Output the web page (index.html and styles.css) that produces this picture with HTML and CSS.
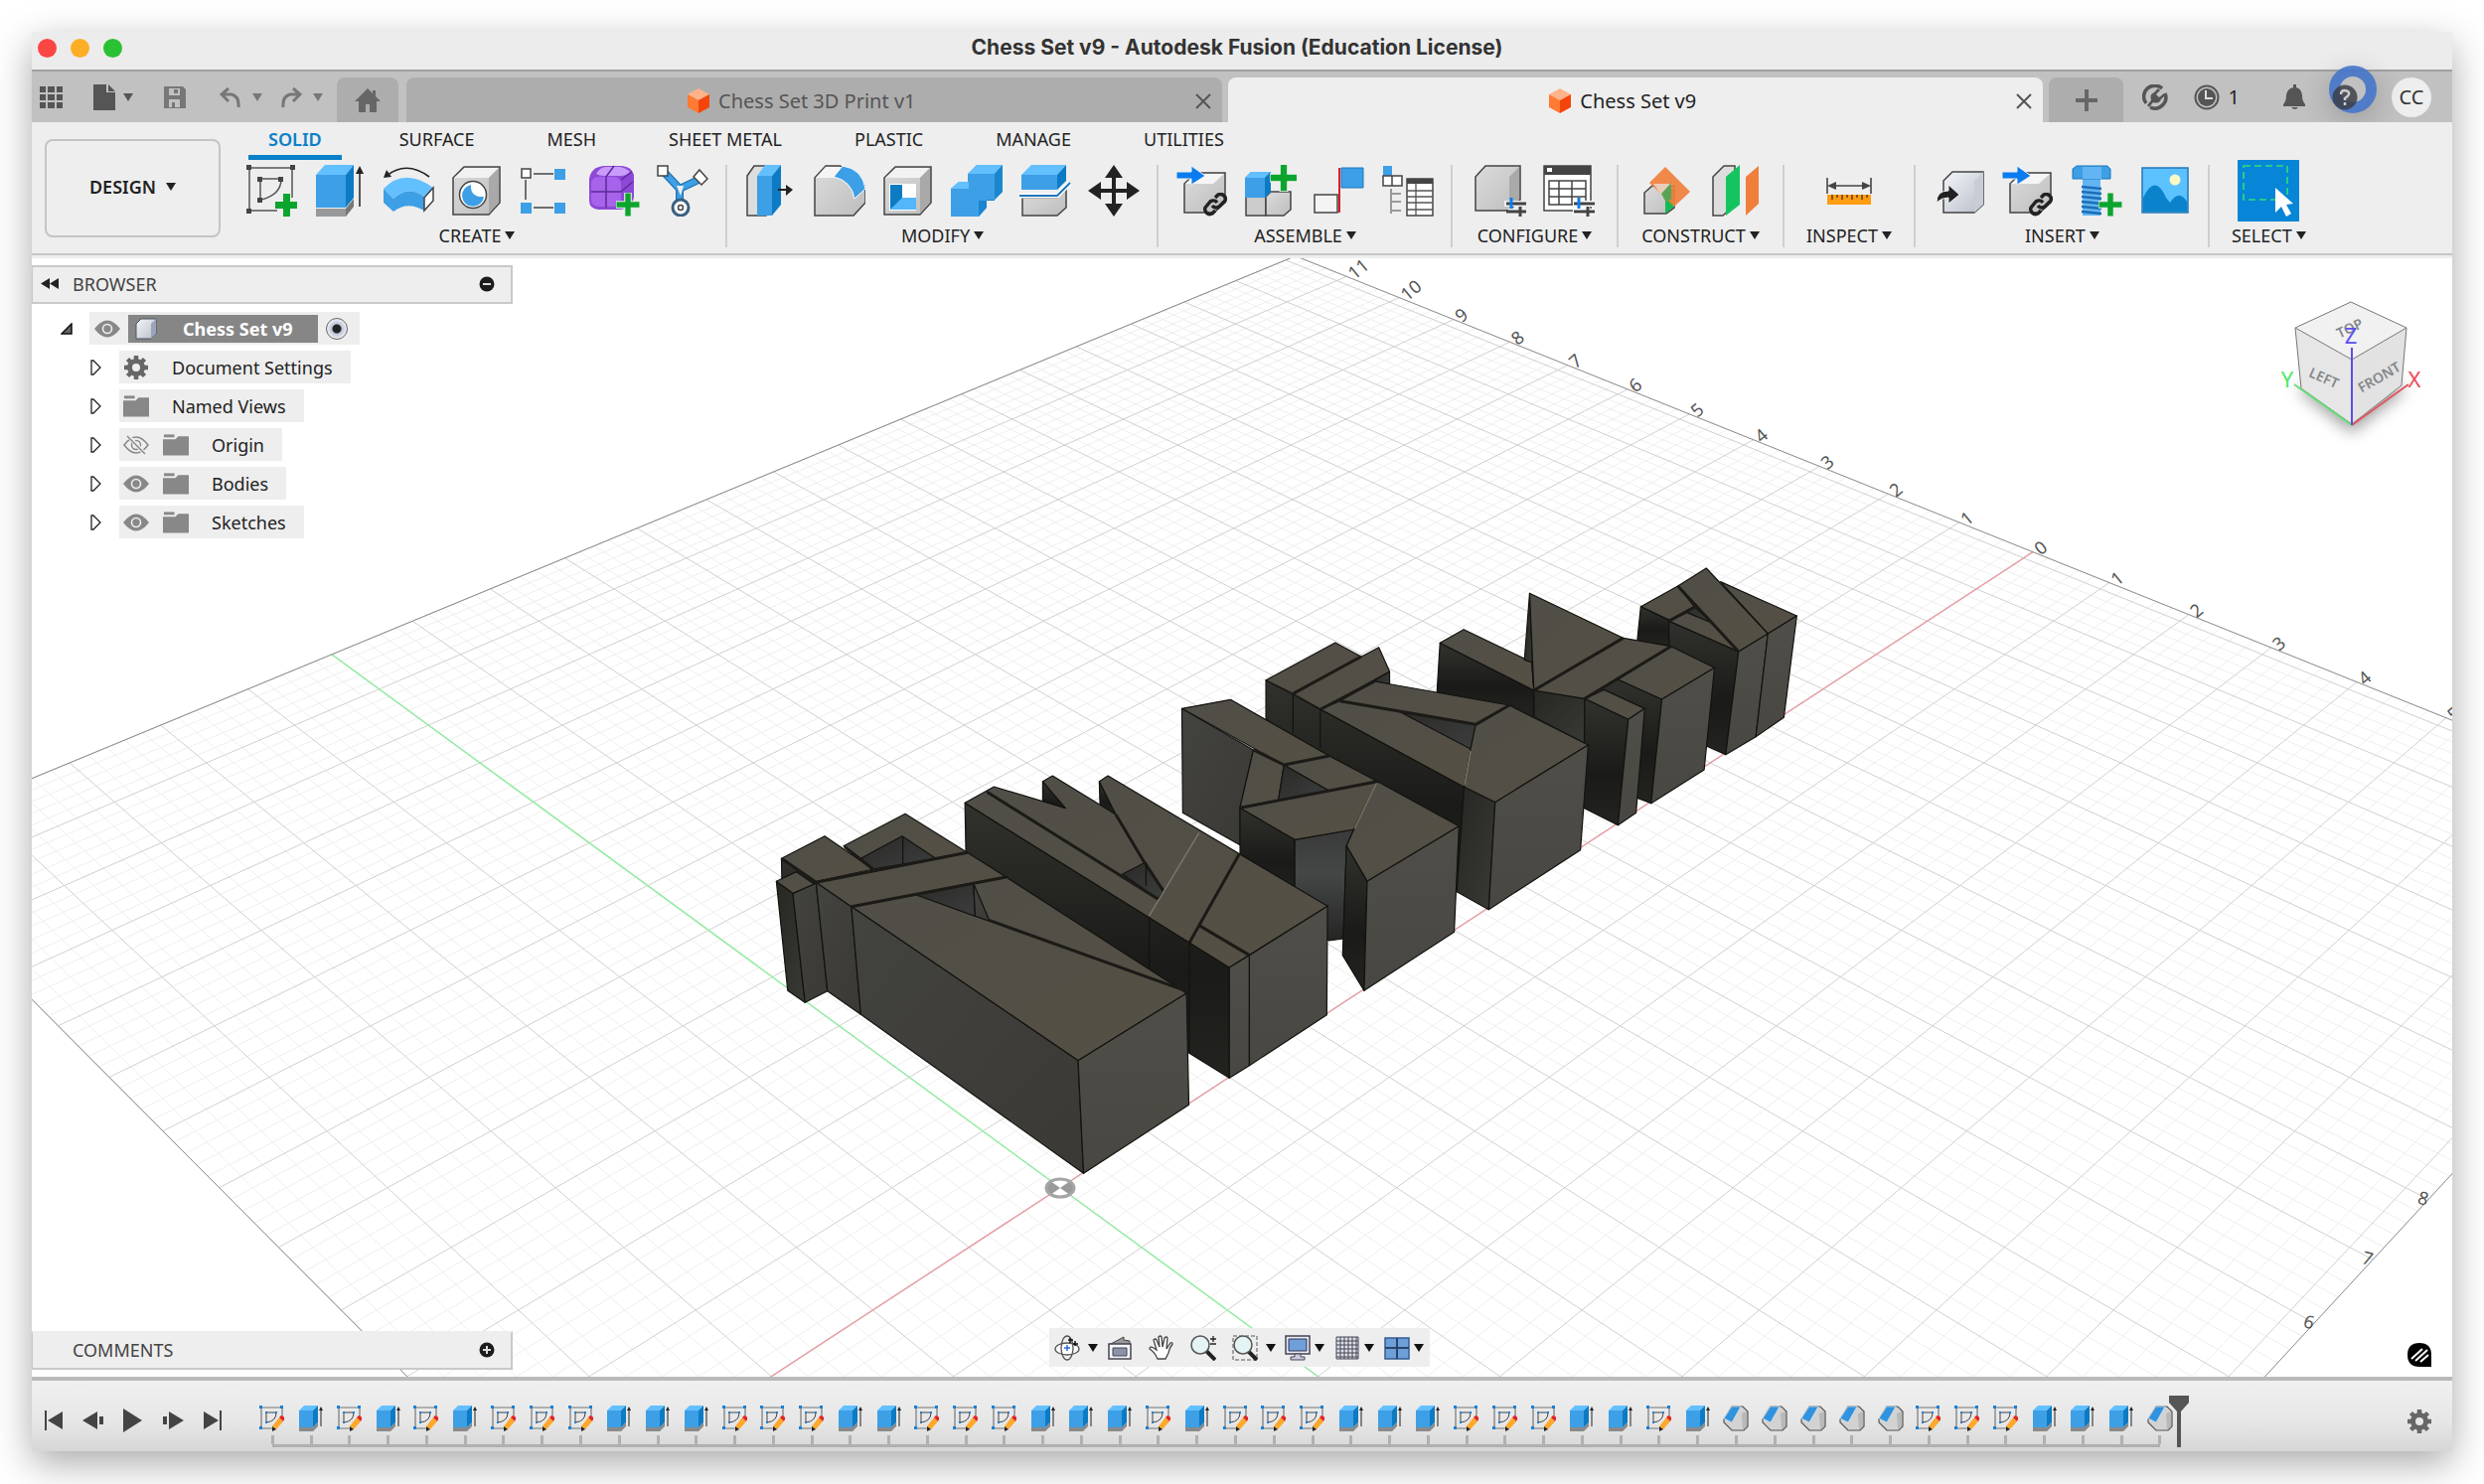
FILE: index.html
```html
<!DOCTYPE html>
<html lang="en">
<head>
<meta charset="utf-8">
<title>Chess Set v9 - Autodesk Fusion (Education License)</title>
<link rel="stylesheet" href="styles.css">
</head>
<body>
<svg class="defs" aria-hidden="true">
  <defs>
    <linearGradient id="gTop" x1="0" y1="0" x2="1" y2="1"><stop offset="0" stop-color="#504e48"/><stop offset="1" stop-color="#555044"/></linearGradient>
    <linearGradient id="gLeft" x1="0" y1="0" x2="1" y2="1"><stop offset="0" stop-color="#434340"/><stop offset="1" stop-color="#3b3934"/></linearGradient>
    <linearGradient id="gDark" x1="0" y1="0" x2="0" y2="1"><stop offset="0" stop-color="#31312d"/><stop offset=".6" stop-color="#1a1a18"/><stop offset="1" stop-color="#232320"/></linearGradient>
    <linearGradient id="gSide" x1="0" y1="0" x2="1" y2="1"><stop offset="0" stop-color="#262622"/><stop offset="1" stop-color="#3a3a35"/></linearGradient>
    <linearGradient id="gRight" x1="0" y1="0" x2="0" y2="1"><stop offset="0" stop-color="#4f4e49"/><stop offset="1" stop-color="#484741"/></linearGradient>
    <linearGradient id="gHole" x1="0" y1="0" x2="1" y2="1"><stop offset="0" stop-color="#2a2a28"/><stop offset="1" stop-color="#3c3e3d"/></linearGradient>
    <linearGradient id="gCurve" x1="0" y1="0" x2="0" y2="1"><stop offset="0" stop-color="#393a39"/><stop offset=".4" stop-color="#454747"/><stop offset="1" stop-color="#242423"/></linearGradient>
    <linearGradient id="gGrey" x1="0" y1="0" x2="1" y2="1"><stop offset="0" stop-color="#dcdcdc"/><stop offset="1" stop-color="#bdbdbd"/></linearGradient>
    <linearGradient id="gSteel" x1="0" y1="0" x2="1" y2="1"><stop offset="0" stop-color="#f4f6fa"/><stop offset="1" stop-color="#b8bdc8"/></linearGradient>
    <filter id="soft" x="-50%" y="-50%" width="200%" height="200%"><feGaussianBlur stdDeviation="8"/></filter>
  </defs>
  <symbol id="i-cube" viewBox="0 0 24 26"><path d="M12 0l11 6-11 6L1 6z" fill="#ffb38a"/><path d="M1 6l11 6v13L1 19z" fill="#ff7a33"/><path d="M23 6l-11 6v13l11-6z" fill="#f5440a"/></symbol>
  <symbol id="i-box" viewBox="0 0 52 52"><path d="M2 13L13 2h36v36L38 50H2z" fill="url(#gGrey)" stroke="#444" stroke-width="1.5"/><path d="M3 13L14 3h34L38 13z" fill="#f2f2f2"/><path d="M38 13L48 3v35L38 49z" fill="#a9a9a9"/></symbol>
  <symbol id="i-plus" viewBox="0 0 22 22"><path d="M8 0h6v8h8v6h-8v8H8v-8H0V8h8z" fill="#0ba52e" stroke="#eee" stroke-width="1"/></symbol>
  <symbol id="i-sketch" viewBox="0 0 52 52"><path d="M4 3h43M4 3v43M47 3v30M4 46h28" fill="none" stroke="#555" stroke-width="1.5"/><path d="M15 14h21M15 14v21M36 14q0 16-20 21" fill="none" stroke="#555" stroke-width="1.5"/><path d="M1 0h5v5H1zM45 0h5v5h-5zM1 44h5v5H1zM12 12h5v5h-5zM33 12h5v5h-5zM12 33h5v5h-5z" fill="#444"/><path d="M38 29h7v8h8v7h-8v8h-7v-8h-8v-7h8z" fill="#0ba52e"/></symbol>
  <symbol id="i-extrude" viewBox="0 0 52 52"><path d="M2 44h30v8H2z" fill="#999"/><path d="M32 44l8-10v8l-8 10z" fill="#777"/><path d="M2 10L11 0h29l-8 10z" fill="#63c0ff"/><path d="M2 10h30v33H2z" fill="#3d9fe5"/><path d="M32 10l8-10v33l-8 10z" fill="#0d7bc4"/><path d="M46 42V6" stroke="#222" stroke-width="1.5"/><path d="M42 9l4-8 4 8z" fill="#222"/></symbol>
  <symbol id="i-revolve" viewBox="0 0 52 52"><path d="M4 11Q24-5 47 12" fill="none" stroke="#222" stroke-width="1.6"/><path d="M1 13l3-8 5 7z" fill="#222"/><path d="M1 24Q22 2 51 23L42 32Q24 20 11 34z" fill="#63c0ff"/><path d="M1 24l10 10v13L1 38zM11 34Q25 20 42 32v14Q25 36 11 47z" fill="#3d9fe5"/><path d="M42 33l9-10v13l-9 10z" fill="#fff" stroke="#444" stroke-width="1.5"/></symbol>
  <symbol id="i-hole" viewBox="0 0 52 52"><use href="#i-box"/><circle cx="22" cy="30" r="13.500" fill="#fff" stroke="#444" stroke-width="1.500"/><path d="M20 20a11 11 0 1 0 13 12q-14 1-13-12z" fill="#3d9fe5"/></symbol>
  <symbol id="i-pattern" viewBox="0 0 52 52"><path d="M14 9h20M6 15v20M14 43h20" stroke="#444" stroke-width="1.5"/><path d="M2 4h9v9H2z" fill="#fff" stroke="#444" stroke-width="1.5"/><path d="M35 4h11v11H35zM1 38h11v11H1zM35 38h11v11H35z" fill="#3d9fe5"/></symbol>
  <symbol id="i-form" viewBox="0 0 52 52"><path d="M1 14Q3 2 16 1h18q10 1 12 9v22q-2 12-14 13H10q-9-1-9-9z" fill="#8c49d6"/><path d="M3 20q0-8 8-8h14q8 0 8 8v14q0 8-8 8H11q-8 0-8-8z" fill="#a763ea"/><path d="M8 9q4-7 10-7h14q6 1 10 5-4 4-9 4H16q-5 0-8-2z" fill="#c99bfa"/><path d="M18 12v31M3 27h30M33 15l11-8M33 27l12-10M18 12l8-11" stroke="#5c2a99" stroke-width="1.500" fill="none"/><use href="#i-plus" x="28" y="28" width="24" height="24"/></symbol>
  <symbol id="i-pipe" viewBox="0 0 52 52"><path d="M8 8l15 16v16M44 14L23 24" stroke="#1c6fb0" stroke-width="8" fill="none"/><path d="M8 8l15 16v16M44 14L23 24" stroke="#3d9fe5" stroke-width="5.500" fill="none"/><path d="M20 21h7l-3 10z" fill="#eee"/><path d="M1 1h10v10H1zM43 5l8 9-6 6-8-8z" fill="#fff" stroke="#444" stroke-width="1.5"/><circle cx="24" cy="43" r="8" fill="#fff" stroke="#3a5f80" stroke-width="3"/><circle cx="24" cy="43" r="2.500" fill="none" stroke="#444" stroke-width="1.500"/></symbol>
  <symbol id="i-press" viewBox="0 0 52 52"><path d="M2 11L9 1h12v50H2z" fill="#ddd" stroke="#444" stroke-width="1.500"/><path d="M12 11h15v40H12z" fill="#3d9fe5"/><path d="M12 11l8-11h16l-9 11z" fill="#63c0ff"/><path d="M27 11L36 0v40l-9 11z" fill="#0d7bc4"/><path d="M33 25h9" stroke="#222" stroke-width="2"/><path d="M41 20l7 5-7 6z" fill="#222"/></symbol>
  <symbol id="i-fillet" viewBox="0 0 52 52"><path d="M1 13L12 1h14Q50 8 52 26v12L40 51H1z" fill="url(#gGrey)" stroke="#444" stroke-width="1.5"/><path d="M2 13L12 2h17l-9 11z" fill="#f5f5f5"/><path d="M20 12L29 1Q49 4 52 24L41 34Q38 16 20 12z" fill="#3d9fe5" stroke="#fff"/></symbol>
  <symbol id="i-shell" viewBox="0 0 52 52"><use href="#i-box"/><path d="M7 19h27v27H7z" fill="#fff"/><path d="M8 20h12v15L8 45z" fill="#0d7bc4"/><path d="M8 45l12-12h14v12z" fill="#55b5fa"/></symbol>
  <symbol id="i-combine" viewBox="0 0 52 52"><path d="M0 24l8-7h9V9l9-9h26v27l-8 8h-8v8l-8 9H0z" fill="#3d9fe5"/><path d="M0 24l8-7h10v7zM18 9l8-9h26l-8 9z" fill="#63c0ff"/><path d="M44 9l8-9v27l-8 8h-8v8l-8 9V36h16z" fill="#1b86cf"/></symbol>
  <symbol id="i-split" viewBox="0 0 52 52"><path d="M3 33h35l9-9v19l-9 8H3z" fill="url(#gGrey)" stroke="#444" stroke-width="1.500"/><path d="M2 10L12 0h35l-9 10z" fill="#63c0ff"/><path d="M2 10h36v15H2z" fill="#3d9fe5"/><path d="M38 10l9-10v16l-9 9z" fill="#0d7bc4"/><path d="M0 31h38L51 18" fill="none" stroke="#fff" stroke-width="5"/><path d="M0 31h38L51 18" fill="none" stroke="#1b76bf" stroke-width="2"/></symbol>
  <symbol id="i-move" viewBox="0 0 52 52"><path d="M26 8v36M8 26h36" stroke="#222" stroke-width="4"/><path d="M26 0l9 13H17zM26 52l9-13H17zM0 26l13-9v18zM52 26l-13-9v18z" fill="#222"/></symbol>
  <symbol id="i-link" viewBox="0 0 28 24"><path d="M11 13a5 5 0 0 0 7 1l6-6a5 5 0 0 0-7-6l-3 3M16 10a5 5 0 0 0-7-1l-5 6a5 5 0 0 0 7 6l3-3" fill="none" stroke="#222" stroke-width="3.500"/></symbol>
  <symbol id="i-inslink" viewBox="0 0 52 52"><path d="M8 19L19 8h30v30L38 48H8z" fill="url(#gGrey)" stroke="#444" stroke-width="1.5"/><path d="M9 19L20 9h28L37 19z" fill="#f5f5f5"/><path d="M0 7h15V1l14 10-14 9v-6H0z" fill="#0a7cf0" stroke="#eee"/><use href="#i-link" x="25" y="28" width="28" height="24"/></symbol>
  <symbol id="i-newcomp" viewBox="0 0 52 52"><path d="M1 32h20v19H1z" fill="#ccc" stroke="#444" stroke-width="1.500"/><path d="M21 32l5-5h20v18l-7 6H21z" fill="url(#gGrey)" stroke="#444" stroke-width="1.5"/><path d="M0 13l6-6h20v20l-6 6H0z" fill="#3d9fe5"/><path d="M0 13l6-6h20l-6 6z" fill="#63c0ff"/><path d="M20 13l6-6v20l-6 6z" fill="#0d7bc4"/><use href="#i-plus" x="25" y="-1" width="28" height="28"/></symbol>
  <symbol id="i-joint" viewBox="0 0 52 52"><path d="M1 30h23v18H1z" fill="#f4f4f4" stroke="#444" stroke-width="1.5"/><path d="M26 3v45" stroke="#d81f2a" stroke-width="2"/><path d="M28 3h22v20H28z" fill="#3d9fe5" stroke="#1b76bf"/></symbol>
  <symbol id="i-bom" viewBox="0 0 52 52"><path d="M1 1h9v10H1z" fill="#3d9fe5"/><path d="M1 11h9v10H1zM10 11h10v10H10z" fill="#fff" stroke="#444" stroke-width="1.500"/><path d="M9 24v25M9 29h10M9 37h10M9 46h10" stroke="#999" stroke-width="2"/><path d="M25 14h26v37H25z" fill="#fff" stroke="#444" stroke-width="1.500"/><path d="M25 14h26v5H25z" fill="#444"/><path d="M25 26h26M25 32h26M25 38h26M25 45h26M34 19v32" stroke="#555" stroke-width="1.300"/></symbol>
  <symbol id="i-conf" viewBox="0 0 52 52"><path d="M1 12L11 1h35v34L35 46H1z" fill="url(#gGrey)" stroke="#444" stroke-width="1.5"/><path d="M35 12L45 2v33L35 45z" fill="#a9a9a9"/><path d="M30 39h22M34 47h18" stroke="#eee" stroke-width="6"/><path d="M32 39h20M32 47h20" stroke="#444" stroke-width="3"/><path d="M37 33v11" stroke="#0a7cf0" stroke-width="3"/><path d="M46 42v10" stroke="#444" stroke-width="3"/></symbol>
  <symbol id="i-conft" viewBox="0 0 52 52"><path d="M1 1h47v45H1z" fill="#fff" stroke="#444" stroke-width="1.5"/><path d="M1 1h47v9H1z" fill="#444"/><path d="M4 3h5v4H4z" fill="#fff"/><path d="M6 16h37v24H6zM6 24h37M6 32h37M16 16v24M29 16v24" fill="none" stroke="#444" stroke-width="1.500"/><path d="M30 39h22M30 47h22" stroke="#fff" stroke-width="6"/><path d="M31 39h21M31 47h21" stroke="#444" stroke-width="3"/><path d="M36 33v11" stroke="#0a7cf0" stroke-width="3"/><path d="M45 42v10" stroke="#444" stroke-width="3"/></symbol>
  <symbol id="i-plane" viewBox="0 0 52 52"><path d="M4 28l8-7h22v22l-8 6H4z" fill="url(#gGrey)" stroke="#444" stroke-width="1.5"/><path d="M25 49V30l9-8v20z" fill="#12b955"/><path d="M25 2L50 27 34 42 9 18z" fill="#f07f3c" opacity=".92"/><path d="M13 19h19L22 32z" fill="#e9cdb9"/><path d="M21 29l10-11v16l-5 4z" fill="#5aa356"/></symbol>
  <symbol id="i-midplane" viewBox="0 0 52 52"><path d="M4 12L15 1h11v39L14 51H4z" fill="#ddd" stroke="#444" stroke-width="1.500"/><path d="M17 12L31 0v40L17 51z" fill="#14c45f"/><path d="M37 12L50 1v38L37 51z" fill="#f07f3c"/></symbol>
  <symbol id="i-measure" viewBox="0 0 52 52"><path d="M4 13v16M48 13v16M7 21h38" stroke="#444" stroke-width="1.6"/><path d="M4 21l9-4v8zM48 21l-9-4v8z" fill="#444"/><path d="M4 30h44v10H4z" fill="#ff9c12"/><path d="M9 30v5M14 30v3M19 30v5M24 30v3M29 30v5M34 30v3M39 30v5M44 30v3" stroke="#663c00" stroke-width="1.500"/></symbol>
  <symbol id="i-derive" viewBox="0 0 52 52"><path d="M10 16L19 7h31v33l-9 8H10z" fill="url(#gSteel)" stroke="#444" stroke-width="1.5"/><path d="M41 16l9-9v33l-9 8z" fill="#c9ccd5"/><path d="M3 38q0-12 12-12v-6l11 10-11 9v-6q-7 0-12 5z" fill="#222" stroke="#eee"/></symbol>
  <symbol id="i-bolt" viewBox="0 0 52 52"><path d="M12 14h18v37H12z" fill="#63b4f2"/><path d="M11 22l20 2M11 27l20 2M11 32l20 2M11 37l20 2M11 42l20 2M11 47l20 2" stroke="#1b6fb5" stroke-width="2.500"/><path d="M2 4l4-3h31l3 3v10H2z" fill="#3d9fe5" stroke="#1b76bf"/><path d="M12 2h19v12H12z" fill="#63b4f2"/><use href="#i-plus" x="28" y="28" width="24" height="24"/></symbol>
  <symbol id="i-canvas" viewBox="0 0 52 52"><path d="M3 3h46v45H3z" fill="#5cc1ff" stroke="#2577b5" stroke-width="1.500"/><path d="M4 33q12-25 23 0l4 5q9-14 17-1v10H4z" fill="#0b83cc"/><circle cx="36" cy="15" r="5.500" fill="#fdf9c4"/></symbol>
  <symbol id="i-select" viewBox="0 0 62 62"><path d="M0 0h62v62H0z" fill="#0785d7"/><path d="M6 6h44v34H6z" fill="none" stroke="#2fe07a" stroke-width="1.600" stroke-dasharray="7 4"/><path d="M38 28l18 16-7 1 5 9-5 3-5-10-6 6z" fill="#fff"/></symbol>
  <symbol id="i-gear" viewBox="0 0 24 24"><circle cx="12" cy="12" r="6.500" fill="none" stroke="#666" stroke-width="5"/><path d="M12 0v4M12 20v4M0 12h4M20 12h4M3.500 3.500l3 3M17.500 17.500l3 3M3.500 20.500l3-3M17.500 6.500l3-3" stroke="#666" stroke-width="4.500"/></symbol>
  <symbol id="i-folder" viewBox="0 0 27 22"><path d="M1 0h11v3H1z" fill="#888"/><path d="M0 5h13l3-3h11v20H0z" fill="#888"/></symbol>
  <symbol id="i-eye" viewBox="0 0 26 18"><path d="M0 9q13-17 26 0-13 17-26 0z" fill="#888"/><circle cx="13" cy="9" r="4.500" fill="none" stroke="#eee" stroke-width="1.600"/></symbol>
  <symbol id="i-eyeoff" viewBox="0 0 26 20"><path d="M1 10q12-16 24 0-12 16-24 0z" fill="none" stroke="#888" stroke-width="1.5"/><circle cx="13" cy="10" r="4.500" fill="none" stroke="#888" stroke-width="1.500"/><path d="M5 1l17 18" stroke="#eee" stroke-width="4"/><path d="M4 1l18 18" stroke="#888" stroke-width="1.500"/></symbol>
  <symbol id="t-S" viewBox="0 0 26 26"><path d="M2 2h21M2 2v21M23 2v12M2 23h12" stroke="#777" fill="none" stroke-width="1.2"/><path d="M7 7h10M7 7v10M17 7q0 9-10 10" stroke="#444" fill="none"/><path d="M0 0h3v3H0zM21 0h3v3h-3zM0 21h3v3H0zM6 6h2v2H6zM16 6h2v2h-2zM6 16h2v2H6z" fill="#1680d8"/><path d="M13 21l7-9 4 4-7 8z" fill="#ffa82a"/><path d="M20 12l2-2q4 1 3 4l-1 2z" fill="#e32227"/><path d="M13 21l4 3-4 2z" fill="#222"/></symbol>
  <symbol id="t-E" viewBox="0 0 26 26"><path d="M1 22h14l5-5v4l-5 5H1z" fill="#8a8a8a"/><path d="M1 5l5-5h14l-5 5z" fill="#63c0ff"/><path d="M1 5h14v17H1z" fill="#3d9fe5"/><path d="M15 5l5-5v17l-5 5z" fill="#0d7bc4"/><path d="M23 21V4" stroke="#222"/><path d="M21 5l2-4 2 4z" fill="#222"/></symbol>
  <symbol id="t-C" viewBox="0 0 26 26"><path d="M1 14L9 1h11l5 5v15l-4 4H9l-8-8z" fill="#d2d2d2" stroke="#555" stroke-width="1.2"/><path d="M19 8l5-2v15l-4 3z" fill="#b8b8b8"/><path d="M1 13L9 1h9l-9 16z" fill="#2f93df" stroke="#eee" stroke-width=".6"/></symbol>
</svg>

<div class="window">
  <header class="titlebar">
    <div class="lights"><button class="light red" aria-label="Close"></button><button class="light amber" aria-label="Minimise"></button><button class="light green" aria-label="Zoom"></button></div>
    <h1>Chess Set v9 - Autodesk Fusion (Education License)</h1>
  </header>

  <div class="tabstrip">
    <div class="quick">
      <button aria-label="Data panel"><svg width="24" height="24" viewBox="0 0 24 24"><path fill="#555" d="M0 1h6v6H0zM8 1h7v6H8zM17 1h6v6h-6zM0 9h6v6H0zM8 9h7v6H8zM17 9h6v6h-6zM0 17h6v6H0zM8 17h7v6H8zM17 17h6v6h-6z"/></svg></button>
      <button aria-label="File" class="pair"><svg width="22" height="26" viewBox="0 0 22 26"><path fill="#555" d="M0 0h13v8h9v18H0zM15 0l7 7h-7z"/></svg><i class="caret"></i></button>
      <button aria-label="Save"><svg width="24" height="24" viewBox="0 0 24 24"><path fill="#777" fill-rule="evenodd" d="M1 1h19l3 3v19H1zM6 3v7h11V3zM6 14v8h11v-8zM11 4h4v4h-4zM9 17h3v5H9z"/></svg></button>
      <button aria-label="Undo" class="pair dim"><svg width="22" height="24" viewBox="0 0 22 24"><path d="M9 3L2 9l7 7M3 9h9q8 2 7 13" fill="none" stroke="#777" stroke-width="3"/></svg><i class="caret"></i></button>
      <button aria-label="Redo" class="pair dim"><svg width="22" height="24" viewBox="0 0 22 24"><path d="M13 3l7 6-7 7M19 9h-9Q2 11 3 22" fill="none" stroke="#777" stroke-width="3"/></svg><i class="caret"></i></button>
    </div>
    <button class="home" aria-label="Home"><svg width="26" height="24" viewBox="0 0 26 24"><path fill="#666" d="M13 0l5 5V2h3v6l5 5h-4v11h-7v-8h-4v8H4V13H0z"/></svg></button>
    <div class="doc"><span class="docname"><svg width="24" height="26"><use href="#i-cube"/></svg>Chess Set 3D Print v1</span><button aria-label="Close tab"><svg width="16" height="16" viewBox="0 0 16 16"><path d="M1 1l14 14M15 1L1 15" stroke="#555" stroke-width="2"/></svg></button></div>
    <div class="doc active"><span class="docname"><svg width="24" height="26"><use href="#i-cube"/></svg>Chess Set v9</span><button aria-label="Close tab"><svg width="16" height="16" viewBox="0 0 16 16"><path d="M1 1l14 14M15 1L1 15" stroke="#555" stroke-width="2"/></svg></button></div>
    <button class="newtab" aria-label="New tab"><svg width="22" height="22" viewBox="0 0 22 22"><path d="M11 0v22M0 11h22" stroke="#666" stroke-width="4"/></svg></button>
    <div class="status">
      <button aria-label="Extensions"><svg width="26" height="26" viewBox="0 0 26 26"><path d="M20 4A11 11 0 0 0 4 19M8 23a11 11 0 0 0 15-14" fill="none" stroke="#555" stroke-width="3.500"/><path d="M5 21l4-5q-2-6 3-8l5 5 2 2q-2 5-8 3l-4 5zM12 8l4-4 2 2-4 4zM17 13l5-4 1 2-4 4z" fill="#555"/></svg></button>
      <button aria-label="Job status" class="jobs"><svg width="26" height="26" viewBox="0 0 26 26"><circle cx="13" cy="13" r="11.500" fill="none" stroke="#555" stroke-width="2"/><circle cx="13" cy="13" r="9" fill="#555"/><path d="M12 6v8h7" stroke="#ddd" stroke-width="2" fill="none"/></svg>1</button>
      <button aria-label="Notifications"><svg width="22" height="26" viewBox="0 0 22 26"><path fill="#555" d="M10 0h3v3q5 1 6 8 0 6 3 9v2H0v-2q3-3 3-9 1-7 7-8zM8 23h7q-3 4-7 0z"/></svg></button>
      <button aria-label="Help" class="help"><i class="ring"></i><svg width="26" height="26" viewBox="0 0 26 26"><circle cx="13" cy="13" r="12.500" fill="#3c3f48" opacity=".85"/><path d="M9 10q0-4 4-4 5 1 4 4-1 2-4 4v2M13 18v3" fill="none" stroke="#ccc" stroke-width="2.500"/></svg></button>
      <button class="avatar">CC</button>
    </div>
  </div>

  <div class="ribbon">
    <button class="workspace">DESIGN <i class="caret"></i></button>
    <div class="tools">
      <nav class="tabs"><a href="#solid" class="on">SOLID</a><a href="#surface">SURFACE</a><a href="#mesh">MESH</a><a href="#sheet">SHEET METAL</a><a href="#plastic">PLASTIC</a><a href="#manage">MANAGE</a><a href="#utilities">UTILITIES</a></nav>
      <div class="groups">
        <section class="group first"><div class="icons">
          <button aria-label="Create sketch"><svg><use href="#i-sketch"/></svg></button><button aria-label="Extrude"><svg><use href="#i-extrude"/></svg></button><button aria-label="Revolve"><svg><use href="#i-revolve"/></svg></button><button aria-label="Hole"><svg><use href="#i-hole"/></svg></button><button aria-label="Pattern"><svg><use href="#i-pattern"/></svg></button><button aria-label="Create form"><svg><use href="#i-form"/></svg></button><button aria-label="Volumetric lattice"><svg><use href="#i-pipe"/></svg></button></div>
          <button class="glabel">CREATE<i class="caret"></i></button></section>
        <section class="group"><div class="icons">
          <button aria-label="Press pull"><svg><use href="#i-press"/></svg></button><button aria-label="Fillet"><svg><use href="#i-fillet"/></svg></button><button aria-label="Shell"><svg><use href="#i-shell"/></svg></button><button aria-label="Combine"><svg><use href="#i-combine"/></svg></button><button aria-label="Split body"><svg><use href="#i-split"/></svg></button><button aria-label="Move"><svg><use href="#i-move"/></svg></button></div>
          <button class="glabel">MODIFY<i class="caret"></i></button></section>
        <section class="group"><div class="icons">
          <button aria-label="Insert component"><svg><use href="#i-inslink"/></svg></button><button aria-label="New component"><svg><use href="#i-newcomp"/></svg></button><button aria-label="Joint"><svg><use href="#i-joint"/></svg></button><button aria-label="Bill of materials"><svg><use href="#i-bom"/></svg></button></div>
          <button class="glabel">ASSEMBLE<i class="caret"></i></button></section>
        <section class="group narrow"><div class="icons">
          <button aria-label="Configure"><svg><use href="#i-conf"/></svg></button><button aria-label="Configuration table"><svg><use href="#i-conft"/></svg></button></div>
          <button class="glabel">CONFIGURE<i class="caret"></i></button></section>
        <section class="group narrow"><div class="icons">
          <button aria-label="Offset plane"><svg><use href="#i-plane"/></svg></button><button aria-label="Midplane"><svg><use href="#i-midplane"/></svg></button></div>
          <button class="glabel">CONSTRUCT<i class="caret"></i></button></section>
        <section class="group narrow"><div class="icons"><button aria-label="Measure"><svg><use href="#i-measure"/></svg></button></div>
          <button class="glabel">INSPECT<i class="caret"></i></button></section>
        <section class="group"><div class="icons">
          <button aria-label="Derive"><svg><use href="#i-derive"/></svg></button><button aria-label="Insert link"><svg><use href="#i-inslink"/></svg></button><button aria-label="Insert fastener"><svg><use href="#i-bolt"/></svg></button><button aria-label="Canvas"><svg><use href="#i-canvas"/></svg></button></div>
          <button class="glabel">INSERT<i class="caret"></i></button></section>
        <section class="group narrow last"><div class="icons"><button class="select" aria-label="Select"><svg><use href="#i-select"/></svg></button></div>
          <button class="glabel">SELECT<i class="caret"></i></button></section>
      </div>
    </div>
  </div>

  <main class="stage">
    <svg class="scene" viewBox="32 257 2436 1129" preserveAspectRatio="xMidYMid slice" role="img" aria-label="Chess set model on the ground grid">
      <g id="grid"></g>
      <g class="mesh" transform="translate(1160 540) scale(.43368 .33333)">
        <!-- pawn -->
        <g>
          <path fill="url(#gDark)" d="M1133 212L1200 253V330L1125 312z"/>
          <path fill="url(#gTop)" d="M1133 212L1219 150 1258 213 1200 253z"/>
          <path fill="url(#gHole)" d="M1200 253L1258 213 1310 275z"/>
          <path fill="url(#gTop)" d="M1198 256L1240 230 1300 262 1360 348z"/>
          <path fill="url(#gDark)" d="M1198 256L1360 348 1330 659 1285 633 1200 520z"/>
          <path fill="url(#gTop)" d="M1318 137L1495 240 1428 294z"/>
          <path fill="url(#gTop)" d="M1219 150L1285 96 1428 294 1360 348z"/>
          <path fill="url(#gRight)" d="M1360 348L1428 294 1400 605 1330 659z"/>
          <path fill="url(#gRight)" d="M1428 294L1495 240 1465 547 1400 605z"/>
          <path class="heavy" d="M1198 256L1258 213M1219 150L1360 348"/>
        </g>
        <!-- knight -->
        <g>
          <path fill="url(#gDark)" d="M667 322L885 465 884 545 660 470z"/>
          <path fill="url(#gTop)" d="M667 322L722 281 880 380 885 465z"/>
          <path fill="url(#gSide)" d="M875 172L885 465 880 380 863 373z"/>
          <path fill="url(#gTop)" d="M875 172L1092 307 885 465z"/>
          <path fill="url(#gSide)" d="M885 465L1003 490 1003 625 885 545z"/>
          <path fill="url(#gTop)" d="M885 465L1092 307 1203 332 1003 490z"/>
          <path fill="url(#gDark)" d="M1040 462L1080 432 1182 492 1157 806 1125 790z"/>
          <path fill="url(#gTop)" d="M1080 432L1203 332 1304 397 1182 492z"/>
          <path fill="url(#gRight)" d="M1182 492L1304 397 1280 705 1157 806z"/>
          <path fill="url(#gDark)" d="M1003 490L1104 553 1080 872 1000 820z"/>
          <path fill="url(#gTop)" d="M1003 490L1048 463 1142 520 1104 553z"/>
          <path fill="url(#gRight)" d="M1104 553L1142 520 1122 835 1080 872z"/>
          <path class="heavy" d="M885 465L1092 307M1003 490L1203 332"/>
        </g>
        <!-- rook -->
        <g>
          <path fill="url(#gDark)" d="M263 434L723 757 706 1073 263 550z"/>
          <path fill="url(#gTop)" d="M263 434L424 321 484 363 326 475z"/>
          <path fill="url(#gSide)" d="M550 408L512 437 550 446z"/>
          <path fill="url(#gTop)" d="M326 475L525 335 550 408 390 522z"/>
          <path fill="url(#gHole)" d="M560 520L750 568 738 648z"/>
          <path fill="url(#gTop)" d="M390 522L435 497 570 527 738 642 723 757z"/>
          <path fill="url(#gTop)" d="M435 497L515 438 828 510 750 568z"/>
          <path fill="url(#gTop)" d="M750 568L828 510 1011 630 795 803 723 757 738 642z"/>
          <path fill="url(#gSide)" d="M723 757L795 803 780 1127 706 1073z"/>
          <path fill="url(#gRight)" d="M795 803L1011 630 993 947 780 1127z"/>
          <path class="heavy" d="M326 475L484 363M390 522L515 438M435 497L750 568 828 510"/>
          <path d="M326 475V595M389 522V640"/>
          <path class="seam" d="M738 648L724 752"/>
        </g>
        <!-- bishop -->
        <g>
          <path fill="url(#gLeft)" d="M68 520L234 645 203 820V932L70 835z"/>
          <path fill="url(#gTop)" d="M68 520L181 493 410 663 305 690z"/>
          <path fill="url(#gTop)" d="M234 645L305 690 292 797 203 818z"/>
          <path fill="url(#gHole)" d="M305 690L410 768 292 797z"/>
          <path fill="url(#gTop)" d="M305 690L410 663 522 740 410 768z"/>
          <path fill="url(#gDark)" d="M203 820L330 916V1090L203 960z"/>
          <path fill="url(#gCurve)" d="M330 916L467 885 450 935 443 1215 409 1221 330 1110z"/>
          <path fill="url(#gTop)" d="M203 820L522 740 467 885 330 916z"/>
          <path fill="url(#gTop)" d="M522 740L711 875 498 1042 450 935 467 885z"/>
          <path fill="url(#gDark)" d="M450 935L498 1042 491 1372 441 1265z"/>
          <path fill="url(#gRight)" d="M498 1042L711 875 700 1195 491 1372z"/>
          <path class="heavy" d="M234 645L305 690 410 663M203 820L522 740"/>
          <path class="seam" d="M520 745L469 882"/>
        </g>
      </g>
      <g class="mesh" transform="translate(760 760) scale(.39541 .33333)">
        <!-- queen -->
        <g>
          <path fill="url(#gDark)" d="M534 145L1207 642V976L1104 900 540 520z"/>
          <path fill="url(#gDark)" d="M732 80L790 161 732 140zM876 80L920 182 878 158z"/>
          <path fill="url(#gTop)" d="M534 145L608 96 790 161 732 80 757 63 918 180 876 80 898 63 1457 457 1207 642z"/>
          <path fill="url(#gHole)" d="M935 360L993 325 1040 412 1025 435z"/>
          <path fill="url(#gRight)" d="M1207 642L1258 605V938L1207 976z"/>
          <path fill="url(#gRight)" d="M1258 605L1457 457 1455 785 1258 938z"/>
          <path class="heavy" d="M590 112L1025 435M918 180L990 323 1040 412M1232 300L1105 568M1130 515L1258 605"/>
          <path d="M995 325V395M1003 490V645M1105 568V900"/>
          <path class="seam" d="M1130 235L1003 486"/>
        </g>
        <!-- king -->
        <g>
          <path fill="url(#gTop)" d="M225 275L382 178 540 295 300 345z"/>
          <path fill="url(#gHole)" d="M270 312L374 245 460 313 300 345z"/>
          <path d="M376 247V328"/>
          <path fill="url(#gDark)" d="M67 313L155 385 160 700 70 500z"/>
          <path fill="url(#gTop)" d="M67 313L177 245 300 345 155 383z"/>
          <path fill="url(#gSide)" d="M54 382L96 418 127 748 83 712z"/>
          <path fill="url(#gLeft)" d="M96 418L155 387 184 713 127 748z"/>
          <path fill="url(#gTop)" d="M54 382L105 353 150 390 96 418z"/>
          <path fill="url(#gLeft)" d="M155 385L245 458 269 784 184 713z"/>
          <path fill="url(#gTop)" d="M155 385L540 295 640 370 245 458z"/>
          <path fill="url(#gTop)" d="M245 458L640 370 1098 720 822 923z"/>
          <path fill="url(#gLeft)" d="M245 458L822 923 836 1264 269 784z"/>
          <path fill="url(#gRight)" d="M822 923L1098 720 1104 1057 836 1264z"/>
          <path fill="url(#gHole)" d="M410 423L556 389 560 487z"/>
          <path fill="url(#gLeft)" d="M556 389L597 502 560 487z"/>
          <path class="heavy" d="M67 313L155 385 540 295M245 458L635 370M228 278L300 345M597 500L1095 712"/>
        </g>
      </g>
      <g class="origin"><ellipse cx="1067" cy="1196" rx="14" ry="9" fill="#fff" opacity=".9"/><path d="M1067 1196L1057 1189Q1048 1196 1057 1203zM1067 1196L1077 1189Q1086 1196 1077 1203z" fill="#999"/><ellipse cx="1067" cy="1196" rx="14" ry="9" fill="none" stroke="#a5a5a5" stroke-width="3"/></g>
      <g class="viewcube">
        <path d="M2312 392L2367 436 2422 392 2367 372z" fill="#555" opacity=".55" filter="url(#soft)"/>
        <path d="M2366 304L2422 330 2367 362 2310 330z" fill="#f1f1f1"/>
        <path d="M2310 330L2367 362V428L2316 391z" fill="#e6e6e6"/>
        <path d="M2422 330L2367 362V428L2417 388z" fill="#e2e2e2"/>
        <path d="M2366 304L2422 330 2367 362 2310 330zM2310 330L2316 391 2367 427 2417 388 2422 330" fill="none" stroke="#777"/>
        <text transform="translate(2367 335) rotate(-25)" class="face small">TOP</text>
        <text transform="translate(2337 385) rotate(24)" class="face small">LEFT</text>
        <text transform="translate(2397 384) rotate(-30)" class="face small">FRONT</text>
        <path d="M2309 387L2367 428" stroke="#63e07a" stroke-width="2"/><path d="M2367 428L2424 387" stroke="#e05560" stroke-width="2"/><path d="M2367 350V428" stroke="#5a50e0" stroke-width="2"/>
        <text x="2366" y="346" class="axis" fill="#5b4ff0">Z</text><text x="2302" y="390" class="axis" fill="#4fe866">Y</text><text x="2430" y="390" class="axis" fill="#ee4a58">X</text>
      </g>
      <path d="M2423 1364q0-12 12-12t12 12v12h-12q-12 0-12-12z" fill="#000"/><path d="M2427 1368l11-10M2431 1370l12-11M2436 1371l8-7" stroke="#fff" stroke-width="2"/>
    </svg>

    <aside class="side">
      <div class="panelbar"><button aria-label="Collapse"><svg width="18" height="11" viewBox="0 0 18 11"><path d="M9 0v11L0 5.500zM18 0v11L9 5.500z" fill="#222"/></svg></button><h2>BROWSER</h2><button aria-label="Hide"><svg width="16" height="16" viewBox="0 0 16 16"><circle cx="8" cy="8" r="7.500" fill="#1c1c1c"/><path d="M4 8h8" stroke="#ddd" stroke-width="2"/></svg></button></div>
      <ul class="tree">
        <li class="root"><svg class="tw" width="12" height="12" viewBox="0 0 12 12"><path d="M11 1v10H1z" fill="#666" stroke="#111" stroke-width="1.500"/></svg><span class="chip"><svg width="26" height="18"><use href="#i-eye"/></svg><span class="sel"><svg width="22" height="22" viewBox="0 0 22 22"><path d="M1 6l5-5h15v15l-5 5H1z" fill="url(#gSteel)" stroke="#4b5166"/><path d="M16 6l5-5v15l-5 5z" fill="#9aa3b8"/></svg>Chess Set v9</span><input type="radio" checked aria-label="Activate Chess Set v9"></span></li>
        <li><svg class="tw" width="12" height="16" viewBox="0 0 12 16"><path d="M1 1h2l7 7-7 7H1z" fill="#fff" stroke="#222" stroke-width="1.300"/></svg><span class="chip"><svg width="26" height="26" viewBox="-1 -1 26 26"><use href="#i-gear" width="24" height="24"/></svg><span>Document Settings</span></span></li>
        <li><svg class="tw" width="12" height="16" viewBox="0 0 12 16"><path d="M1 1h2l7 7-7 7H1z" fill="#fff" stroke="#222" stroke-width="1.300"/></svg><span class="chip"><svg width="26" height="22"><use href="#i-folder"/></svg><span>Named Views</span></span></li>
        <li><svg class="tw" width="12" height="16" viewBox="0 0 12 16"><path d="M1 1h2l7 7-7 7H1z" fill="#fff" stroke="#222" stroke-width="1.300"/></svg><span class="chip"><svg width="26" height="20"><use href="#i-eyeoff"/></svg><svg width="26" height="22"><use href="#i-folder"/></svg><span>Origin</span></span></li>
        <li><svg class="tw" width="12" height="16" viewBox="0 0 12 16"><path d="M1 1h2l7 7-7 7H1z" fill="#fff" stroke="#222" stroke-width="1.300"/></svg><span class="chip"><svg width="26" height="18"><use href="#i-eye"/></svg><svg width="26" height="22"><use href="#i-folder"/></svg><span>Bodies</span></span></li>
        <li><svg class="tw" width="12" height="16" viewBox="0 0 12 16"><path d="M1 1h2l7 7-7 7H1z" fill="#fff" stroke="#222" stroke-width="1.300"/></svg><span class="chip"><svg width="26" height="18"><use href="#i-eye"/></svg><svg width="26" height="22"><use href="#i-folder"/></svg><span>Sketches</span></span></li>
      </ul>
      <div class="panelbar comments"><h2>COMMENTS</h2><button aria-label="Show comments"><svg width="16" height="16" viewBox="0 0 16 16"><circle cx="8" cy="8" r="7.500" fill="#1c1c1c"/><path d="M4 8h8M8 4v8" stroke="#ddd" stroke-width="2"/></svg></button></div>
    </aside>

    <div class="navbar">
      <button class="pair" aria-label="Orbit"><svg viewBox="0 0 26 26"><ellipse cx="13" cy="14" rx="12" ry="6" fill="#fff" stroke="#555" stroke-width="1.300"/><ellipse cx="13" cy="13" rx="6" ry="12" fill="none" stroke="#555" stroke-width="1.3"/><path d="M13 10v6M10 13h6" stroke="#2a6bd0" stroke-width="1.500"/><path d="M16 3v5M14 5h5M21 6v5M19 9h5" stroke="#111" stroke-width="1.500"/></svg><i class="caret"></i></button>
      <button aria-label="Look at"><svg viewBox="0 0 26 26"><path d="M2 10L17 2v3l6 1v5H2z" fill="#999" stroke="#444"/><path d="M2 9h22v15H2z" fill="#f5f6fa" stroke="#445" stroke-width="1.500"/><path d="M6 13h14v8H6z" fill="#8b93a5" stroke="#445"/></svg></button>
      <button aria-label="Pan"><svg viewBox="0 0 26 26"><path d="M9 24Q6 17 1 14q0-3 4-1l3 2L5 5q2-2 3 0l3 7-1-10q2-2 3 0l1 10 2-9q2-2 3 0l-1 11 4-6q2-1 2 1-3 4-4 9l-3 6z" fill="#fff" stroke="#444" stroke-width="1.3"/></svg></button>
      <button aria-label="Zoom"><svg viewBox="0 0 26 26"><path d="M16 16l9 9" stroke="#222" stroke-width="4"/><circle cx="10" cy="10" r="9" fill="#e4f3f3" stroke="#555" stroke-width="1.5"/><path d="M23 1v6M20 4h6M20 9h6" stroke="#222" stroke-width="1.300"/></svg></button>
      <button class="pair" aria-label="Fit"><svg viewBox="0 0 26 26"><path d="M1 1h24v24H1z" fill="none" stroke="#555" stroke-dasharray="4 2"/><path d="M16 16l9 9" stroke="#222" stroke-width="4"/><circle cx="11" cy="10" r="9" fill="#e4f3f3" stroke="#555" stroke-width="1.500"/></svg><i class="caret"></i></button>
      <button class="pair tight" aria-label="Display settings"><svg viewBox="0 0 26 26"><path d="M1 1h24v18H1z" fill="#e8ecf2" stroke="#445" stroke-width="1.5"/><path d="M4 4h18v12H4z" fill="#6f9fd8" stroke="#335"/><path d="M10 19h6v3h4v3H6v-3h4z" fill="#ccd" stroke="#445"/></svg><i class="caret"></i></button>
      <button class="pair tight" aria-label="Grid and snaps"><svg viewBox="0 0 26 26"><path d="M2 2h22v22H2z" fill="#dde0e8"/><path d="M2 2h22v22H2zM6 2v22M10 2v22M14 2v22M18 2v22M22 2v22M2 6h22M2 10h22M2 14h22M2 18h22M2 22h22" fill="none" stroke="#445"/></svg><i class="caret"></i></button>
      <button class="pair tight" aria-label="Viewports"><svg viewBox="0 0 26 26"><path d="M1 3h24v21H1z" fill="#6f9fd8" stroke="#335c94" stroke-width="1.5"/><path d="M13 3v21M1 13h24" stroke="#27466f" stroke-width="2"/></svg><i class="caret"></i></button>
    </div>
  </main>

  <footer class="timeline">
    <div class="playback">
      <button aria-label="To start"><svg viewBox="0 0 22 22"><path d="M2 1h2v20H2zM20 2v18L5 11z" fill="#444"/></svg></button>
      <button aria-label="Step back"><svg viewBox="0 0 22 22"><path d="M15 2v18L0 11zM17 7h4v8h-4z" fill="#444"/></svg></button>
      <button aria-label="Play"><svg viewBox="0 0 22 24"><path d="M1 0l19 12L1 24z" fill="#444"/></svg></button>
      <button aria-label="Step forward"><svg viewBox="0 0 22 22"><path d="M7 2v18l15-9zM1 7h4v8H1z" fill="#444"/></svg></button>
      <button aria-label="To end"><svg viewBox="0 0 22 22"><path d="M18 1h2v20h-2zM2 2v18l15-9z" fill="#444"/></svg></button>
    </div>
    <ol class="features" id="features"></ol>
    <div class="tail"><svg class="marker" width="20" height="52" viewBox="0 0 20 52"><path d="M0 0h20v7l-8 9v36H8V16L0 7z" fill="#555"/></svg><button aria-label="Timeline settings"><svg width="26" height="26" viewBox="-1 -1 26 26"><use href="#i-gear" width="24" height="24"/></svg></button></div>
  </footer>
</div>
<script src="app.js"></script>
</body>
</html>
```
FILE: styles.css
```css
* { box-sizing: border-box; }
body {
  margin: 0;
  padding: 32px 32px 33px;
  height: 100vh;
  background: #fff;
  color: #222;
  font: 18px/24px "Noto Sans", "Open Sans", sans-serif;
}
button {
  display: inline-flex;
  align-items: center;
  justify-content: center;
  padding: 0;
  border: 0;
  background: none;
  color: inherit;
  font: inherit;
}
svg { display: block; flex: none; }
h1, h2, ul, ol { margin: 0; padding: 0; font-weight: 400; list-style: none; }
.defs { position: absolute; width: 0; height: 0; }
.caret {
  flex: none;
  width: 0;
  height: 0;
  border: 5px solid transparent;
  border-top: 8px solid currentColor;
  border-bottom: 0;
}
.window {
  display: flex;
  flex-direction: column;
  height: 100%;
  background: #eee;
  box-shadow: 0 12px 36px rgba(0, 0, 0, .34);
}

/* title bar */
.titlebar {
  display: grid;
  grid-template-columns: 1fr auto 1fr;
  align-items: center;
  height: 40px;
  padding: 0 16px 6px 6px;
  background: #ececec;
  border-bottom: 2px solid #a0a2a0;
}
.lights { display: flex; gap: 14px; }
.light { width: 19px; height: 19px; border-radius: 50%; }
.red { background: #fc4644; }
.amber { background: #fdae25; }
.green { background: #2ac132; }
.titlebar h1 { font: 700 21px/24px Inter, sans-serif; color: #333; }

/* document tabs */
.tabstrip { display: flex; align-items: flex-end; height: 51px; background: #c1c1c1; }
.quick { display: flex; align-self: center; align-items: center; gap: 30px; width: 307px; padding-left: 8px; color: #555; }
.pair { gap: 8px; }
.dim { color: #777; }
.quick .dim { margin-left: 3px; gap: 11px; }
.quick .dim + .dim { margin-left: -12px; }
.home, .newtab, .doc { height: 45px; border-radius: 8px 8px 0 0; background: #adadad; }
.home { width: 62px; margin-right: 8px; }
.doc { display: flex; flex: 1; align-items: center; padding: 2px 11px 0 1px; margin-right: 6px; color: #555; }
.doc.active { background: #eee; color: #222; }
.docname { display: flex; flex: 1; justify-content: center; align-items: center; gap: 8px; font-size: 20px; }
.newtab { width: 75px; }
.status { display: flex; align-self: center; align-items: center; justify-content: space-between; width: 331px; padding: 0 21px 0 19px; font-size: 20px; }
.jobs { gap: 8px; margin-right: 18px; }
.help { position: relative; margin: 0 8px 0 0; }
.help svg { position: relative; }
.ring {
  position: absolute;
  left: -3px;
  top: -19px;
  width: 48px;
  height: 48px;
  border: 11px solid rgba(68, 116, 200, .9);
  border-radius: 50%;
  box-shadow: 0 8px 30px rgba(0, 0, 0, .2);
}
.avatar { width: 40px; height: 40px; border-radius: 50%; background: #eee; color: #333; }

/* ribbon */
.ribbon { display: flex; height: 134px; padding: 0 12px 0 13px; border-bottom: 2px solid #c6c6c6; box-shadow: 0 3px 0 #eee; z-index: 1; background: #eee; }
.workspace { align-self: flex-start; width: 177px; height: 99px; margin: 17px 25px 0 0; gap: 10px; border: 2px solid #c4c4c4; border-radius: 8px; font-weight: 600; padding-bottom: 4px; }
.tabs { display: flex; gap: 33px; padding-left: 3px; }
.tabs a { height: 38px; padding: 5px 20px 0; color: #222; text-decoration: none; }
.tabs .on { margin-right: 5px; color: #0a80c9; font-weight: 600; border-bottom: 5px solid #0a80c9; }
.groups { display: flex; margin-top: 5px; }
.group { display: flex; flex-direction: column; align-items: center; height: 83px; padding: 0 17px 0 18px; border-right: 2px solid #cfcfcf; }
.group.first { padding-left: 0; }
.group.narrow { padding: 0 22px; }
.group.last { border: 0; }
.icons { display: flex; gap: 17px; height: 52px; align-items: center; }
.icons button, .icons svg { width: 52px; height: 52px; }
.icons .select, .icons .select svg { width: 62px; height: 62px; }
.glabel { gap: 4px; height: 24px; margin-top: 7px; }

/* modelling area */
.stage { position: relative; flex: 1; min-height: 0; display: flex; background: #fff; }
.scene { position: absolute; inset: 0; width: 100%; height: 100%; }
.minor { stroke: #efefef; }
.major { stroke: #d0d0d0; }
.edge { stroke: #8c8c8c; }
.xaxis { stroke: #e5a0a6; stroke-width: 1.5px; }
.yaxis { stroke: #97eba4; stroke-width: 1.5px; }
.tick { font-size: 18px; fill: #555; }
.tick.near { text-anchor: middle; }
.mesh path { stroke: #12120f; stroke-width: 1.2px; vector-effect: non-scaling-stroke; stroke-linejoin: round; }
.mesh .heavy { fill: none; stroke: #1b1a17; stroke-width: 3px; }
.mesh .seam { fill: none; stroke: #77756a; stroke-width: 1.5px; }
.face { font-size: 16px; font-weight: 600; fill: #85878a; text-anchor: middle; }
.face.small { font-size: 14px; }
.axis { font-size: 22px; text-anchor: middle; }
.side { position: relative; display: flex; flex-direction: column; width: 484px; padding: 10px 0 7px; }
.panelbar { display: flex; align-items: center; height: 39px; padding: 0 16px 2px 8px; background: #eee; border: 2px solid #c9c9c9; border-left-width: 1px; }
.panelbar h2 { flex: 1; padding-left: 14px; font-size: 18px; color: #444; }
.comments { margin-top: auto; border-top-color: #eee; }
.comments h2 { padding-left: 32px; }
.tree { padding-top: 8px; }
.tree li { display: flex; align-items: center; height: 33px; margin-bottom: 6px; padding-left: 59px; gap: 17px; }
.tree .root { padding-left: 29px; }
.chip { display: flex; align-items: center; height: 33px; gap: 14px; padding: 0 18px 0 4px; background: #eee; }
.chip > span:last-child { padding-left: 9px; }
.root .chip { gap: 8px; padding-right: 12px; padding-left: 5px; }
.sel { display: flex; align-items: center; gap: 26px; height: 28px; padding: 0 26px 0 7px; background: #868686; color: #fff; font-weight: 700; }
.tree input {
  appearance: none;
  width: 22px;
  height: 22px;
  margin: 0;
  border: 1px solid #666;
  border-radius: 50%;
  background: radial-gradient(circle, #222 0 4px, #b9c2d4 5px, #eef1f6 10px);
}
.navbar { position: absolute; left: 1024px; bottom: 10px; display: flex; align-items: center; gap: 16px; height: 39px; width: 383px; padding: 0 5px; background: #eee; color: #111; }
.navbar svg { width: 26px; height: 26px; }
.navbar .pair { margin-right: -7px; }
.navbar .tight { gap: 4px; margin-right: -6px; }

/* timeline */
.timeline { display: flex; height: 75px; border-top: 4px solid #bababa; background: linear-gradient(#f0f0f0, #e6e6e6 60%, #d6d6d6); }
.playback { display: flex; gap: 18px; width: 223px; padding: 0 0 0 11px; height: 80px; align-items: center; }
.playback svg { width: 22px; height: 24px; }
.features { display: flex; flex: 1; padding-top: 25px; }
.features li { flex: 1; display: flex; flex-direction: column; align-items: center; height: 42px; border-bottom: 3px solid #b0b0b0; }
.features svg { width: 26px; height: 26px; }
.features li::after { content: ""; width: 3px; height: 9px; margin-top: 4px; background: #b0b0b0; }
.features li:first-child, .features li:last-child { border-image: linear-gradient(90deg, transparent 50%, #b0b0b0 50%) 3; border-width: 0 0 3px; border-style: solid; }
.features li:last-child { border-image: linear-gradient(90deg, #b0b0b0 50%, transparent 50%) 3; }
.tail { display: flex; justify-content: space-between; width: 285px; margin-left: -10px; padding: 15px 20px 0 0; z-index: 1; }
.tail button { height: 52px; }
```
FILE: app.js
```js
// Ground grid, projected from plane coordinates (x, y) to the scene.
const NS = "http://www.w3.org/2000/svg";
const grid = document.getElementById("grid");
const X0 = -5, X1 = 15.2, Y0 = -8.2, Y1 = 12;

function project(x, y) {
  const depth = x + y + 39.11;
  return [
    1255 + (39.11 * (1067 - 1255) + 3310 * (x - y)) / depth,
    -1091 + 89433 / depth
  ];
}
function line(a, b, cls) {
  const el = document.createElementNS(NS, "line");
  const [x1, y1] = project(...a), [x2, y2] = project(...b);
  Object.entries({ x1, y1, x2, y2, class: cls }).forEach(([k, v]) => el.setAttribute(k, v));
  grid.append(el);
}
function label(text, at, dx, dy, turn, cls) {
  const el = document.createElementNS(NS, "text");
  const [x, y] = project(...at);
  el.setAttribute("transform", `translate(${x + dx} ${y + dy}) rotate(${turn})`);
  el.setAttribute("class", cls);
  el.textContent = text;
  grid.append(el);
}
for (const kind of ["minor", "major"]) {
  for (let i = X0 * 5; i <= X1 * 5; i++) {
    if ((i % 5 === 0) === (kind === "major")) line([i / 5, Y0], [i / 5, Y1], kind);
  }
  for (let i = Y0 * 5; i <= Y1 * 5; i++) {
    if ((i % 5 === 0) === (kind === "major")) line([X0, i / 5], [X1, i / 5], kind);
  }
}
line([X0, 0], [X1, 0], "xaxis");
line([0, Y0], [0, Y1], "yaxis");
line([X0, Y0], [X1, Y0], "edge");
line([X0, Y1], [X1, Y1], "edge");
line([X0, Y0], [X0, Y1], "edge");
line([X1, Y0], [X1, Y1], "edge");
for (let y = -5; y <= 11; y++) label(Math.abs(y), [X1, y], 8, 4, -40, "tick");
for (let x = 6; x <= 8; x++) label(x, [x, Y0], -7, 5, 15, "tick near");

// Timeline: S sketch, E extrude, C chamfer.
const steps = "SESESESSSEEESSSEESSSEEESESSSEEESSSEESECCCCCSSSEEEC";
const names = { S: "Sketch", E: "Extrude", C: "Chamfer" };
document.getElementById("features").innerHTML = [...steps]
  .map(s => `<li><button aria-label="${names[s]}"><svg><use href="#t-${s}"/></svg></button></li>`)
  .join("");
```
